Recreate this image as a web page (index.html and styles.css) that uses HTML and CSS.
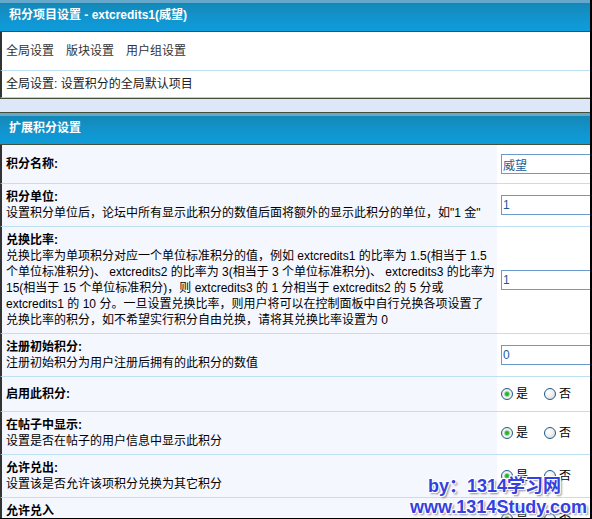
FILE: index.html
```html
<!DOCTYPE html>
<html lang="zh-CN">
<head>
<meta charset="utf-8">
<title>积分项目设置</title>
<link rel="stylesheet" href="styles.css">
</head>
<body>
<div class="frame">
  <section class="panel panel-top">
    <div class="panel-head">积分项目设置 - extcredits1(威望)</div>
    <div class="nav-row">
      <a class="nav-link">全局设置</a>
      <a class="nav-link">版块设置</a>
      <a class="nav-link">用户组设置</a>
    </div>
    <div class="info-row">全局设置: 设置积分的全局默认项目</div>
  </section>

  <section class="panel panel-main">
    <div class="panel-head">扩展积分设置</div>

    <div class="row">
      <div class="label"><b class="title">积分名称:</b></div>
      <div class="ctrl"><input class="field" type="text" value="威望"></div>
    </div>

    <div class="row">
      <div class="label"><b class="title">积分单位:</b><span class="desc">设置积分单位后，论坛中所有显示此积分的数值后面将额外的显示此积分的单位，如"1 金"</span></div>
      <div class="ctrl"><input class="field" type="text" value="1"></div>
    </div>

    <div class="row">
      <div class="label"><b class="title">兑换比率:</b><span class="desc">兑换比率为单项积分对应一个单位标准积分的值，例如 extcredits1 的比率为 1.5(相当于 1.5<br>个单位标准积分)、 extcredits2 的比率为 3(相当于 3 个单位标准积分)、 extcredits3 的比率为<br>15(相当于 15 个单位标准积分)，则 extcredits3 的 1 分相当于 extcredits2 的 5 分或<br>extcredits1 的 10 分。一旦设置兑换比率，则用户将可以在控制面板中自行兑换各项设置了<br>兑换比率的积分，如不希望实行积分自由兑换，请将其兑换比率设置为 0</span></div>
      <div class="ctrl"><input class="field" type="text" value="1"></div>
    </div>

    <div class="row">
      <div class="label"><b class="title">注册初始积分:</b><span class="desc">注册初始积分为用户注册后拥有的此积分的数值</span></div>
      <div class="ctrl"><input class="field" type="text" value="0"></div>
    </div>

    <div class="row">
      <div class="label"><b class="title">启用此积分:</b></div>
      <div class="ctrl"><div class="radios"><span class="radio on"></span><span class="rl">是</span><span class="radio"></span><span class="rl">否</span></div></div>
    </div>

    <div class="row">
      <div class="label"><b class="title">在帖子中显示:</b><span class="desc">设置是否在帖子的用户信息中显示此积分</span></div>
      <div class="ctrl"><div class="radios"><span class="radio on"></span><span class="rl">是</span><span class="radio"></span><span class="rl">否</span></div></div>
    </div>

    <div class="row">
      <div class="label"><b class="title">允许兑出:</b><span class="desc">设置该是否允许该项积分兑换为其它积分</span></div>
      <div class="ctrl"><div class="radios"><span class="radio on"></span><span class="rl">是</span><span class="radio"></span><span class="rl">否</span></div></div>
    </div>

    <div class="row">
      <div class="label"><b class="title">允许兑入</b><span class="desc">设置该是否允许其它积分兑换为该项积分</span></div>
      <div class="ctrl"><div class="radios"><span class="radio on"></span><span class="rl">是</span><span class="radio"></span><span class="rl">否</span></div></div>
    </div>
  </section>

  <div class="watermark">
    <div class="wm-line wm-by">by：1314学习网</div>
    <div class="wm-line">www.1314Study.com</div>
  </div>
</div>
</body>
</html>
```

FILE: styles.css
```css
html, body {
  margin: 0;
  padding: 0;
  background: #dee7f7;
}

.frame {
  width: 592px;
  height: 519px;
  box-sizing: border-box;
  border-right: 2px solid #000;
  border-bottom: 1px solid #000;
  background: #dee7f7;
  overflow: hidden;
  position: relative;
  font-family: "Liberation Sans", "Noto Sans CJK SC", sans-serif;
  font-size: 12px;
  line-height: 16px;
  color: #000;
}

.panel-head {
  height: 31px;
  line-height: 31px;
  padding-left: 9px;
  color: #fff;
  font-weight: bold;
  background: linear-gradient(to bottom, #64a9cb 0, #64a9cb 3px, #1487b7 3px, #1391c7 14px, #1097d3 22px, #0e9cda 31px);
  border-bottom: 1px solid #44503a;
  white-space: nowrap;
}

.panel-top {
  border-bottom: 1px solid #44503a;
  margin-bottom: 13px;
}

.panel-main {
  border-top: 1px solid #44503a;
}

.nav-row {
  display: flex;
  gap: 12px;
  padding: 11px 4px;
  background: #fff;
  border-left: 2px solid #333;
  border-bottom: 1px solid #bee0f3;
}

.nav-link {
  color: #333;
  text-decoration: none;
}

.info-row {
  padding: 5px 4px;
  background: #fff;
  color: #222;
  border-left: 2px solid #333;
  border-bottom: 1px solid #b9cbd4;
}

.row {
  display: grid;
  grid-template-columns: 495px minmax(0, 1fr);
  border-left: 2px solid #333;
  border-bottom: 1px solid #bfe0f2;
}

.label {
  background: #f5f7fe;
  padding: 5px 4px;
  display: flex;
  flex-direction: column;
  justify-content: center;
  white-space: nowrap;
}

.title {
  font-weight: bold;
}

.ctrl {
  background: #fff;
  padding: 5px 0 5px 4px;
  display: flex;
  align-items: center;
  overflow: hidden;
}

.field {
  flex-shrink: 0;
  width: 160px;
  height: 20px;
  box-sizing: border-box;
  margin: 4px 0;
  padding: 0 1px;
  border: 1px solid #6a9acb;
  background: #fff;
  color: #1b5a98;
  font-family: "Liberation Sans", "Noto Sans CJK SC", sans-serif;
  font-size: 12px;
  outline: none;
}

.radios {
  display: flex;
  align-items: center;
  height: 16px;
  margin: 4px 0;
  white-space: nowrap;
}

.radio {
  width: 12px;
  height: 12px;
  box-sizing: border-box;
  border-radius: 50%;
  border: 1px solid #1f5b8c;
  background: radial-gradient(circle at 35% 35%, #ffffff 0, #f2f2f2 40%, #cfcfcf 100%);
  margin-right: 3px;
  flex-shrink: 0;
}

.radio.on {
  background: radial-gradient(circle at 50% 50%, #22a322 0, #3bbf3b 1.8px, #a8dca8 2.6px, #f4f4f4 3.4px, #dcdcdc 100%);
}

.rl {
  margin-right: 16px;
}

.watermark {
  position: absolute;
  left: 410px;
  top: 476px;
  font-family: "Liberation Sans", "Noto Sans CJK SC", sans-serif;
  font-weight: bold;
  font-size: 18px;
  line-height: 21px;
  color: #3440df;
  text-shadow: 1px 1px 0 #fff, -1px -1px 0 #fff, 1px -1px 0 #fff, -1px 1px 0 #fff, 2px 2px 2px #8a8a9a;
  white-space: nowrap;
}

.wm-by {
  padding-left: 18px;
}
```
